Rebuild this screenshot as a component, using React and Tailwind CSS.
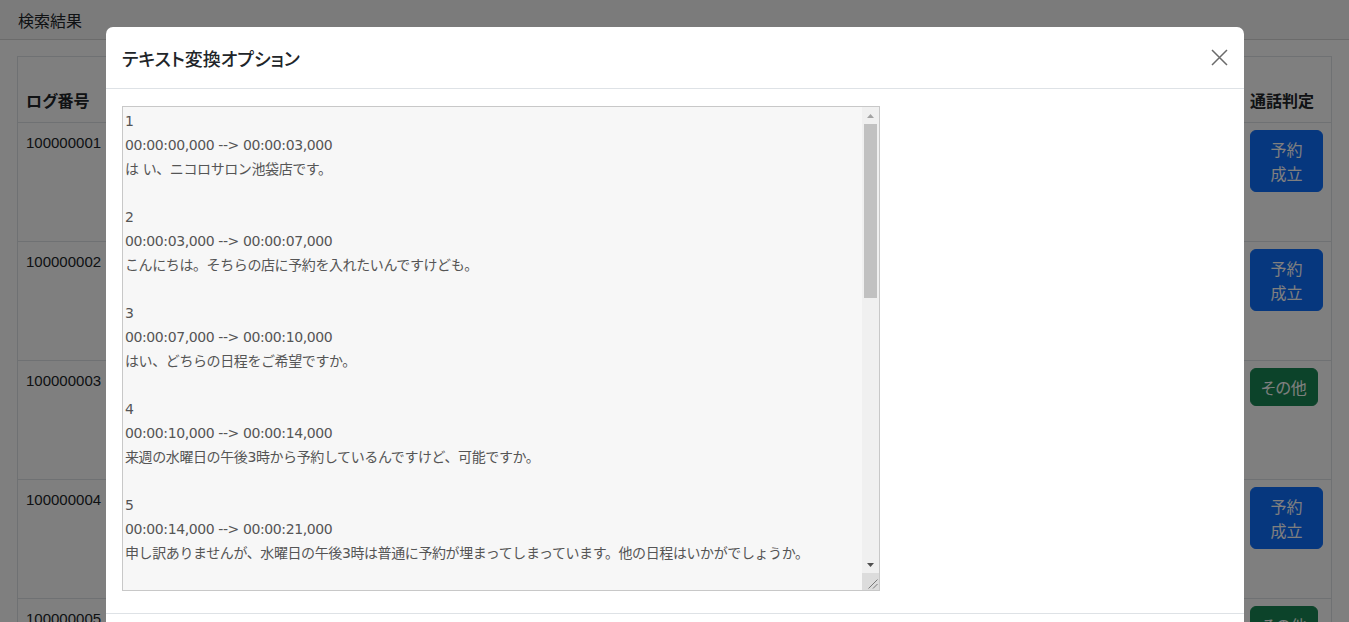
const entries = [
  ['00:00:00,000', '00:00:03,000', 'は い、ニコロサロン池袋店です。'],
  ['00:00:03,000', '00:00:07,000', 'こんにちは。そちらの店に予約を入れたいんですけども。'],
  ['00:00:07,000', '00:00:10,000', 'はい、どちらの日程をご希望ですか。'],
  ['00:00:10,000', '00:00:14,000', '来週の水曜日の午後3時から予約しているんですけど、可能ですか。'],
  ['00:00:14,000', '00:00:21,000', '申し訳ありませんが、水曜日の午後3時は普通に予約が埋まってしまっています。他の日程はいかがでしょうか。'],
  ['00:00:21,000', '00:00:24,000', 'そうですか。では、木曜日の午後はどうですか。'],
  ['00:00:24,000', '00:00:29,000', '木曜日の午後でしたら、2時と4時が空いております。'],
  ['00:00:29,000', '00:00:32,000', 'じゃあ、4時でお願いします。'],
  ['00:00:32,000', '00:00:36,000', 'かしこまりました。お名前とお電話番号をお願いいたします。'],
  ['00:00:36,000', '00:00:41,000', '山田です。電話番号は090-1234-5678です。'],
  ['00:00:41,000', '00:00:46,000', '山田様、木曜日の午後4時でご予約を承りました。'],
  ['00:00:46,000', '00:00:49,000', 'ありがとうございます。よろしくお願いします。'],
  ['00:00:49,000', '00:00:52,000', 'お待ちしております。失礼いたします。'],
];

const transcript = entries
  .map(([from, to, text], i) => `${i + 1}\n${from} --> ${to}\n${text}`)
  .join('\n\n');

const rows = [
  { id: '100000001', result: 'booked' },
  { id: '100000002', result: 'booked' },
  { id: '100000003', result: 'other' },
  { id: '100000004', result: 'booked' },
  { id: '100000005', result: 'other' },
];

function ResultBadge({ result }) {
  if (result === 'booked') {
    return (
      <button className="w-[73px] rounded-md border border-[#0d6efd] bg-[#0d6efd] px-3 py-[6px] text-base leading-6 text-white">
        予約成立
      </button>
    );
  }
  return (
    <button className="rounded-md border border-[#198754] bg-[#198754] px-[10px] py-[6px] text-base leading-6 text-white">
      その他
    </button>
  );
}

// classic windows-style scrollbar drawn over the textarea edge
function FakeScrollbar() {
  return (
    <div className="pointer-events-none absolute right-px top-px flex h-[483px] w-[17px] flex-col bg-[#f0f0f0]">
      <div className="flex h-[17px] items-center justify-center">
        <svg width="7" height="4" viewBox="0 0 7 4">
          <path d="M0 4L3.5 0L7 4Z" fill="#a3a3a3" />
        </svg>
      </div>
      <div className="flex-1 px-[2px]">
        <div className="h-[174px] bg-[#c1c1c1]" />
      </div>
      <div className="flex h-[17px] items-center justify-center">
        <svg width="7" height="4" viewBox="0 0 7 4">
          <path d="M0 0L3.5 4L7 0Z" fill="#505050" />
        </svg>
      </div>
      <div className="relative h-[17px] bg-[#dcdcdc]">
        <svg className="absolute bottom-[1px] right-[1px]" width="12" height="12" viewBox="0 0 12 12" stroke="#7a7a7a" strokeWidth="1">
          <path d="M11.5 2.5L2.5 11.5M11.5 7L7 11.5" />
        </svg>
      </div>
    </div>
  );
}

export default function App() {
  return (
    <div className="relative h-[622px] overflow-hidden bg-white font-['Noto_Sans_CJK_JP',sans-serif] text-[#212529]">
      {/* 検索結果 card */}
      <div className="flex h-10 items-center border-b border-[#d6d6d6] bg-[#f7f7f7] px-[18px] text-base [font-feature-settings:'palt']">
        検索結果
      </div>
      <div className="px-[17px] pt-4">
        <table className="w-full border-collapse border border-[#dee2e6] text-base [font-feature-settings:'palt']">
          <thead>
            <tr className="h-[66px] border-b border-[#dee2e6]">
              <th className="w-[120px] px-2 pb-[10px] text-left align-bottom font-bold">ログ番号</th>
              <th className="px-2 pb-[10px] text-left align-bottom font-bold">録音日時</th>
              <th className="w-[89px] border-l border-[#dee2e6] px-2 pb-[10px] text-left align-bottom font-bold">通話判定</th>
            </tr>
          </thead>
          <tbody>
            {rows.map((row) => (
              <tr key={row.id} className="h-[119px] border-b border-[#dee2e6]">
                <td className="px-2 pt-2 align-top font-['Liberation_Sans',sans-serif] text-[15px] leading-6">{row.id}</td>
                <td className="px-2 pt-2 align-top"></td>
                <td className="border-l border-[#dee2e6] px-2 pt-[7px] align-top">
                  <ResultBadge result={row.result} />
                </td>
              </tr>
            ))}
          </tbody>
        </table>
      </div>

      {/* backdrop */}
      <div className="fixed inset-0 bg-black/50" />

      {/* modal */}
      <div className="fixed left-[106px] top-[27px] w-[1138px] rounded-[7px] bg-white">
        <div className="flex h-[62px] items-center justify-between border-b border-[#dee2e6] px-4">
          <h5 className="text-[18px] font-medium leading-[30px] [font-feature-settings:'palt']">テキスト変換オプション</h5>
          <button className="-mr-[3px] flex h-6 w-6 items-center justify-center text-[#6b6b6b]">
            <svg width="17" height="17" viewBox="0 0 17 17" fill="none" stroke="currentColor" strokeWidth="1.5">
              <path d="M1 1l15 15M16 1L1 16" />
            </svg>
          </button>
        </div>
        <div className="px-4 pb-[22px] pt-[17px]">
          <div className="relative w-[758px]">
            <textarea
              readOnly
              value={transcript}
              className="block h-[485px] w-[758px] resize-none overflow-hidden border border-[#c8c8c8] bg-[#f7f7f7] p-[2px] font-[family-name:DejaVu_Sans,Noto_Sans_CJK_JP,sans-serif] text-[14px] leading-6 tracking-[-0.4px] text-[#555] outline-none"
            />
            <FakeScrollbar />
          </div>
        </div>
        <div className="h-[70px] border-t border-[#dee2e6]" />
      </div>
    </div>
  );
}
